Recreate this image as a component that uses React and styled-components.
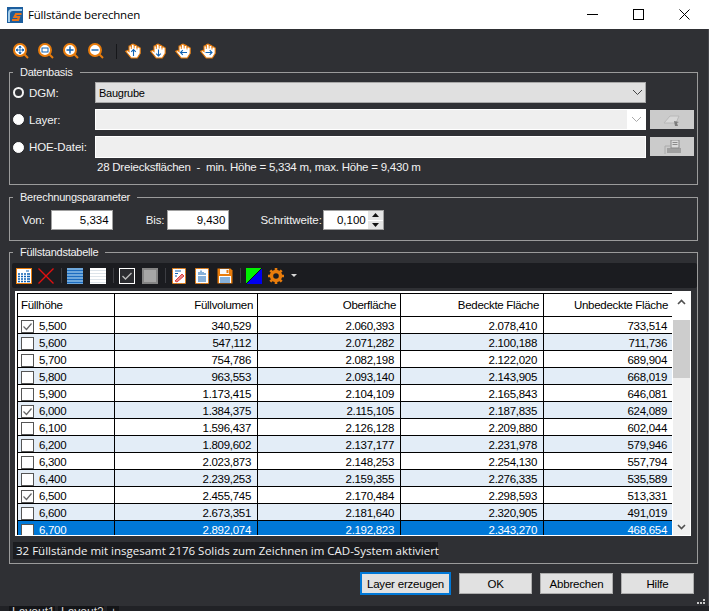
import React from 'react'
import styled, { createGlobalStyle } from 'styled-components'

const GlobalStyle = createGlobalStyle`
  html, body { margin: 0; padding: 0; background: #2f3034; }
  * { box-sizing: border-box; }
`

const orange = '#e87c0c'
const blue = '#0f62b4'

const Page = styled.div`
  width: 709px;
  height: 611px;
  overflow: hidden;
  display: flex;
  flex-direction: column;
  background: #2f3034;
  font-family: "Liberation Sans", Arial, sans-serif;
  font-size: 11px;
  color: #f2f2f2;
`

const TitleBar = styled.div`
  height: 29px;
  flex: none;
  background: #fff;
  display: flex;
  align-items: center;
  padding-left: 7px;
  color: #000;
`

const TitleText = styled.span`
  margin-left: 5px;
  font-family: "Open Sans", sans-serif;
  font-size: 11.5px;
  letter-spacing: -0.2px;
`

const WindowButtons = styled.div`
  margin-left: auto;
  display: flex;
  align-items: center;
  gap: 35px;
  padding-right: 19px;
`

const Body = styled.div`
  flex: 1;
  min-height: 0;
  padding: 14px 10px 0 9px;
  display: flex;
  flex-direction: column;
  border-right: 1px solid #45464b;
`

const MainToolbar = styled.div`
  height: 22px;
  flex: none;
  display: flex;
  align-items: flex-start;
  padding-left: 4px;
  gap: 9px;
`

const ToolSep = styled.i`
  width: 1px;
  height: 15px;
  margin: 1px -1px 0 3px;
  background: #16171a;
  flex: none;
`

const TableSep = styled.i`
  width: 1px;
  height: 15px;
  margin-right: -2px;
  background: #3c3d42;
  flex: none;
`

const ToolCell = styled.span`
  width: 16px;
  height: 16px;
  flex: none;
  display: flex;
  align-items: center;
  justify-content: center;
  margin-left: ${p => p.$ml || 0}px;
`

const Group = styled.fieldset`
  margin: ${p => p.$top}px 0 0;
  padding: 0;
  min-width: 0;
  height: ${p => p.$height}px;
  flex: none;
  border: 1px solid #9b9b9b;
  border-radius: 0;
`

const GroupTitle = styled.legend`
  margin-left: 3px;
  padding: 0 7px;
  font-size: 11px;
  line-height: 14px;
  letter-spacing: -0.25px;
  color: #f2f2f2;
`

const SourceGrid = styled.div`
  display: grid;
  grid-template-columns: 82px 555px 44px;
  padding: 3px 0 0 3px;
`

const SourceRow = styled.div`
  display: contents;
`

const RadioLabel = styled.label`
  display: flex;
  align-items: center;
  gap: 5px;
  height: ${p => p.$h}px;
  margin-bottom: ${p => p.$mb}px;
  font-size: 11.5px;
  letter-spacing: -0.1px;
`

const Radio = styled.span`
  width: 11px;
  height: 11px;
  border-radius: 50%;
  flex: none;
  background: ${p => (p.$on ? '#2f3034' : '#fff')};
  border: ${p => (p.$on ? '2.5px solid #f4f4f4' : '1px solid #fff')};
`

const Combo = styled.div`
  width: 551px;
  height: ${p => p.$h}px;
  margin-bottom: ${p => p.$mb}px;
  display: flex;
  align-items: center;
  justify-content: space-between;
  padding-left: 3px;
  color: #000;
  letter-spacing: -0.25px;
  background: ${p => (p.$off ? '#efefef' : '#e0e0e0')};
  border: ${p => (p.$off ? '1px solid #fff' : '1px solid #a8a8a8')};
`

const ComboArrow = styled.span`
  width: ${p => (p.$off ? 18 : 16)}px;
  height: 100%;
  display: flex;
  align-items: center;
  justify-content: center;
  background: ${p => (p.$off ? '#fff' : 'transparent')};
`

const PickButton = styled.div`
  width: 44px;
  height: 19px;
  margin-top: 1px;
  display: flex;
  align-items: center;
  justify-content: center;
  background: #cbcbcb;
`

const InfoText = styled.div`
  margin: 2px 0 0 87px;
  line-height: 15px;
  font-size: 11.5px;
  letter-spacing: -0.23px;
`

const ParamRow = styled.div`
  display: flex;
  align-items: center;
  padding-left: 12px;
  height: 22px;
  margin-top: 5px;
`

const ParamLabel = styled.span`
  font-size: 11.5px;
  letter-spacing: -0.1px;
  margin-left: ${p => p.$left || 0}px;
  margin-right: ${p => p.$right || 4}px;
`

const NumberField = styled.div`
  width: ${p => p.$w || 62}px;
  height: 20px;
  display: flex;
  align-items: center;
  justify-content: flex-end;
  background: #fff;
  border: 1px solid #a0a0a0;
  padding-right: 3px;
  color: #000;
  font-size: 11.5px;
`

const SpinBox = styled(NumberField)`
  padding-right: 0;
`

const SpinButtons = styled.div`
  width: 15px;
  height: 18px;
  margin-left: 2px;
  display: flex;
  flex-direction: column;
  gap: 1px;
`

const SpinButton = styled.div`
  flex: 1;
  background: #e4e4e4;
  display: flex;
  align-items: center;
  justify-content: center;
`

const TableToolbar = styled.div`
  height: 25px;
  margin: 4px 0 0 2px;
  width: 685px;
  background: #1b1c20;
  border-radius: 2px;
  display: flex;
  align-items: center;
  padding-left: 4px;
  gap: 7px;
`

const GridFrame = styled.div`
  margin: 3px 0 0 5px;
  width: 676px;
  height: 245px;
  background: #fff;
  display: flex;
  padding: 2px 2px 0 2px;
  overflow: hidden;
  border-bottom: 1px solid #fff;
`

const GridClip = styled.div`
  width: 655px;
  flex: none;
  overflow: hidden;
`

const DataTable = styled.table`
  border-collapse: collapse;
  table-layout: fixed;
  width: 656px;
  color: #000;
  font-size: 11.5px;
  letter-spacing: -0.3px;
`

const HeadCell = styled.th`
  height: 23px;
  padding: 0 ${p => (p.$last ? 5 : 4)}px 0 3px;
  border: 1px solid #000;
  font-weight: 400;
  text-align: ${p => (p.$left ? 'left' : 'right')};
`

const Row = styled.tr`
  background: ${p => (p.$selected ? '#0078d7' : p.$alt ? '#e3edf7' : '#fff')};
  color: ${p => (p.$selected ? '#fff' : '#000')};
`

const Cell = styled.td`
  height: 17px;
  padding: 1px 6px 0 3px;
  border: 1px solid #000;
  border-top-style: ${p => (p.$focus ? 'dotted' : 'solid')};
  text-align: right;
  white-space: nowrap;
`

const FirstCell = styled(Cell)`
  padding: 0 0 0 3px;
  text-align: left;
`

const CellInner = styled.div`
  display: flex;
  align-items: center;
  gap: 5px;
  height: 15px;
  padding-top: 1px;
`

const Check = styled.span`
  width: 13px;
  height: 13px;
  flex: none;
  margin-top: 1px;
  background: #fff;
  border: 1px solid #555;
  display: flex;
  align-items: center;
  justify-content: center;
`

const ScrollBar = styled.div`
  width: 17px;
  margin-left: 1px;
  flex: none;
  display: flex;
  flex-direction: column;
  background: #f0f0f0;
`

const ScrollArrow = styled.div`
  height: ${p => p.$h}px;
  flex: none;
  display: flex;
  align-items: ${p => (p.$down ? 'center' : 'flex-start')};
  justify-content: center;
  padding-top: ${p => (p.$down ? 0 : 6)}px;
  background: ${p => (p.$down ? 'transparent' : '#fff')};
`

const ScrollThumb = styled.div`
  height: 58px;
  flex: none;
  background: #cdcdcd;
`

const ScrollRest = styled.div`
  flex: 1;
`

const StatusBar = styled.div`
  margin: 6px 0 0 3px;
  width: 425px;
  height: 17px;
  background: #1b1c20;
  display: flex;
  align-items: center;
  padding-left: 3px;
  font-family: "Open Sans", sans-serif;
  font-size: 11.5px;
  white-space: nowrap;
`

const Footer = styled.div`
  display: flex;
  justify-content: flex-end;
  align-items: center;
  gap: 8px;
  margin-top: 8px;
  padding-right: 4px;
`

const DialogButton = styled.button`
  width: ${p => p.$w || 73}px;
  height: ${p => (p.$primary ? 23 : 21)}px;
  padding: 0;
  background: #e1e1e1;
  color: #000;
  border: ${p => (p.$primary ? '2px solid #0078d7' : '1px solid #adadad')};
  font-family: "Liberation Sans", Arial, sans-serif;
  font-size: 11.5px;
  letter-spacing: -0.2px;
`

const Grip = styled.div`
  height: 5px;
  margin: 4px -8px 0 0;
  display: flex;
  justify-content: flex-end;
`

const TabStrip = styled.div`
  height: 5px;
  flex: none;
  background: #212226;
  display: flex;
  padding-left: 9px;
  gap: 3px;
  overflow: hidden;
  color: #d8d8d8;
  font-size: 12px;
  line-height: 13px;
`

const Tab = styled.span`
  background: #131417;
  padding: 0 3px;
  width: ${p => p.$w}px;
  flex: none;
`

const rows = [
  ['5,500', '340,529', '2.060,393', '2.078,410', '733,514', true],
  ['5,600', '547,112', '2.071,282', '2.100,188', '711,736'],
  ['5,700', '754,786', '2.082,198', '2.122,020', '689,904'],
  ['5,800', '963,553', '2.093,140', '2.143,905', '668,019'],
  ['5,900', '1.173,415', '2.104,109', '2.165,843', '646,081'],
  ['6,000', '1.384,375', '2.115,105', '2.187,835', '624,089', true],
  ['6,100', '1.596,437', '2.126,128', '2.209,880', '602,044'],
  ['6,200', '1.809,602', '2.137,177', '2.231,978', '579,946'],
  ['6,300', '2.023,873', '2.148,253', '2.254,130', '557,794'],
  ['6,400', '2.239,253', '2.159,355', '2.276,335', '535,589'],
  ['6,500', '2.455,745', '2.170,484', '2.298,593', '513,331', true],
  ['6,600', '2.673,351', '2.181,640', '2.320,905', '491,019'],
  ['6,700', '2.892,074', '2.192,823', '2.343,270', '468,654'],
]

const AppLogo = () => (
  <svg width="16" height="16" viewBox="0 0 16 16">
    <rect width="16" height="16" fill="#1c5e9e" />
    <path d="M1 15V6Q1 2 5 2H15V4H6Q3 4 3 7V15z" fill="#a5cdea" />
    <path d="M14.5 7H9L7.5 10H12L11 13H5" fill="none" stroke="#e8741a" strokeWidth="2.2" />
  </svg>
)

const Magnifier = ({ children }) => (
  <svg width="16" height="16" viewBox="0 0 16 16">
    <path d="M10.5 10.5L15 15" stroke={orange} strokeWidth="2" />
    <circle cx="7" cy="7" r="6" fill="#fff" stroke={orange} strokeWidth="2" />
    {children}
  </svg>
)

const Hand = ({ arrow }) => (
  <svg width="16" height="16" viewBox="0 0 16 16">
    <path
      d="M.8 8.3L2.8 7.4 4 8.5V3.2L5.5 2.6 6.3 3.4V1.6L8 1 9.2 1.6V2.6L10.5 2.2 12 3V4.2L13.4 3.8 15.2 5V10.4L12.3 15H6.2z"
      fill="#fff"
      stroke={orange}
      strokeWidth="1.1"
    />
    <path d="M6.3 3.4V6M9.2 2.6V5.5M12 4.2V6.5" stroke={orange} strokeWidth=".9" />
    <path d={arrow} fill="none" stroke={blue} strokeWidth="1.1" />
  </svg>
)

const Chevron = ({ color = '#444' }) => (
  <svg width="11" height="7" viewBox="0 0 11 7">
    <path d="M1 1l4.5 4.5L10 1" fill="none" stroke={color} strokeWidth="1" />
  </svg>
)

const CalcIcon = () => (
  <svg width="16" height="16" viewBox="0 0 16 16">
    <rect x=".5" y=".5" width="15" height="15" fill="#fff" stroke={orange} />
    <path d="M10 3h3" stroke={blue} />
    <path d="M2 6h12M2 8.5h12M2 11h12M2 13.5h12" stroke={blue} strokeWidth="1.5" />
    <path d="M4.5 5v10M7.5 5v10M10.5 5v10" stroke="#fff" />
  </svg>
)

const CrossIcon = () => (
  <svg width="16" height="16" viewBox="0 0 16 16">
    <path d="M.5.5l15 15M15.5.5l-15 15" stroke="#e01010" strokeWidth="1.4" />
  </svg>
)

const LinesIcon = ({ fill, line }) => (
  <svg width="16" height="16" viewBox="0 0 16 16">
    <rect width="16" height="16" fill={fill} />
    <path d="M0 2.5h16M0 5.5h16M0 8.5h16M0 11.5h16M0 14.5h16" stroke={line} />
  </svg>
)

const CheckAllIcon = () => (
  <svg width="16" height="16" viewBox="0 0 16 16">
    <rect x=".5" y=".5" width="15" height="15" fill="#2b2c30" stroke="#fff" />
    <path d="M3.5 8l3 3 6-6" fill="none" stroke="#bbb" strokeWidth="1.4" />
  </svg>
)

const GrayBoxIcon = () => (
  <svg width="16" height="16" viewBox="0 0 16 16">
    <rect x="1" y="1" width="14" height="14" fill="#a6a6a6" stroke="#858585" strokeWidth="2" />
  </svg>
)

const EditDocIcon = () => (
  <svg width="14" height="16" viewBox="0 0 14 16">
    <rect x=".5" y=".5" width="13" height="15" fill="#fff" stroke={orange} strokeDasharray="2 .6" />
    <path d="M3 3h6M3 5.5h3M3 8h2" stroke={blue} />
    <path d="M3 13l7-7 2 2-7 6z" fill="#e88" stroke="#d02020" strokeWidth=".8" />
  </svg>
)

const ChartDocIcon = () => (
  <svg width="14" height="16" viewBox="0 0 14 16">
    <rect x=".5" y=".5" width="13" height="15" fill="#fff" stroke={orange} strokeDasharray="2 .6" />
    <path d="M4 7V4M6 7V2.5M8 7V4M10 7V5" stroke={blue} />
    <path d="M3 9h8M3 11h8M3 13h8" stroke={blue} />
  </svg>
)

const SaveIcon = () => (
  <svg width="16" height="16" viewBox="0 0 16 16">
    <path d="M.5.5h13l2 2v13H.5z" fill={orange} />
    <rect x="3" y="1" width="9" height="5" fill="#f7f7f7" />
    <rect x="9.5" y="2" width="2" height="3" fill={orange} />
    <rect x="2" y="8" width="12" height="7" fill="#fff" />
    <path d="M3 10h10M3 12h10M3 14h10" stroke={blue} />
  </svg>
)

const ColorIcon = () => (
  <svg width="16" height="16" viewBox="0 0 16 16">
    <rect width="16" height="16" fill="#0000f0" />
    <path d="M0 0h16L0 16z" fill="#00f000" />
    <path d="M16 0L0 16" stroke="#111" />
  </svg>
)

const GearIcon = () => (
  <svg width="16" height="16" viewBox="0 0 16 16">
    <circle cx="8" cy="8" r="4.5" fill="none" stroke={orange} strokeWidth="3.4" />
    <path
      d="M8 0v3M8 13v3M0 8h3M13 8h3M2.3 2.3l2.2 2.2M11.5 11.5l2.2 2.2M13.7 2.3l-2.2 2.2M4.5 11.5l-2.2 2.2"
      stroke={orange}
      strokeWidth="2.6"
    />
  </svg>
)

const Caret = () => (
  <svg width="6" height="4" viewBox="0 0 6 4">
    <path d="M0 0h6L3 3z" fill="#d8d8d8" />
  </svg>
)

const TinyArrow = ({ down }) => (
  <svg width="7" height="4" viewBox="0 0 7 4">
    <path d={down ? 'M0 0h7L3.5 4z' : 'M0 4h7L3.5 0z'} fill="#111" />
  </svg>
)

const ScrollChevron = ({ down }) => (
  <svg width="9" height="6" viewBox="0 0 9 6">
    <path d={down ? 'M1 1l3.5 3.5L8 1' : 'M1 5l3.5-3.5L8 5'} fill="none" stroke="#505050" strokeWidth="1.6" />
  </svg>
)

const App = () => {
  return (
    <Page>
      <GlobalStyle />
      <TitleBar>
        <AppLogo />
        <TitleText>Füllstände berechnen</TitleText>
        <WindowButtons>
          <svg width="11" height="11" viewBox="0 0 11 11"><path d="M0 5.5h11" stroke="#000" /></svg>
          <svg width="11" height="11" viewBox="0 0 11 11"><rect x=".5" y=".5" width="10" height="10" fill="none" stroke="#000" /></svg>
          <svg width="11" height="11" viewBox="0 0 11 11"><path d="M.5.5l10 10M10.5.5l-10 10" stroke="#000" /></svg>
        </WindowButtons>
      </TitleBar>

      <Body>
        <MainToolbar>
          <Magnifier><path d="M7 3.5v7M3.5 7h7M7 3L5.8 4.4h2.4zM7 11l-1.2-1.4h2.4zM3 7l1.4-1.2v2.4zM11 7L9.6 5.8v2.4z" stroke={blue} fill={blue} strokeWidth=".8" /></Magnifier>
          <Magnifier><rect x="4" y="5" width="6" height="4" fill="none" stroke={blue} /></Magnifier>
          <Magnifier><path d="M3.5 7h7M7 3.5v7" stroke={blue} strokeWidth="1.4" /></Magnifier>
          <Magnifier><path d="M3.5 7h7" stroke={blue} strokeWidth="1.4" /></Magnifier>
          <ToolSep />
          <Hand arrow="M8.5 13V6.5M6.2 8.8l2.3-2.3 2.3 2.3" />
          <Hand arrow="M8.5 6.5V13M6.2 10.7L8.5 13l2.3-2.3" />
          <Hand arrow="M12 9.5H5.5M7.8 7.2L5.5 9.5l2.3 2.3" />
          <Hand arrow="M5.5 9.5H12M9.7 7.2L12 9.5l-2.3 2.3" />
        </MainToolbar>

        <Group $top={0} $height={120}>
          <GroupTitle>Datenbasis</GroupTitle>
          <SourceGrid>
            <SourceRow>
              <RadioLabel $h={21} $mb={6}><Radio $on />DGM:</RadioLabel>
              <Combo $h={21} $mb={6}>Baugrube<ComboArrow><Chevron /></ComboArrow></Combo>
              <span />
            </SourceRow>
            <SourceRow>
              <RadioLabel $h={21} $mb={6}><Radio />Layer:</RadioLabel>
              <Combo $off $h={21} $mb={6}><span /><ComboArrow $off><Chevron color="#aaa" /></ComboArrow></Combo>
              <PickButton>
                <svg width="18" height="12" viewBox="0 0 18 12">
                  <path d="M1 9L7 2h9l-3 7z" fill="#d8d8d8" stroke="#b8b8b8" />
                  <path d="M11 7l5 1-2 1 1 3h-3z" fill="#7c7c7c" />
                </svg>
              </PickButton>
            </SourceRow>
            <SourceRow>
              <RadioLabel $h={22} $mb={0}><Radio />HOE-Datei:</RadioLabel>
              <Combo $off $h={22} $mb={0} />
              <PickButton>
                <svg width="17" height="14" viewBox="0 0 17 14">
                  <path d="M1 14V6h5" fill="none" stroke="#aaa" />
                  <rect x="3" y="8" width="14" height="5" fill="#a0a0a0" />
                  <rect x="7" y="0" width="8" height="8" fill="#dcdcdc" stroke="#8a8a8a" />
                  <path d="M8.5 2.5h5M8.5 4.5h5" stroke="#8a8a8a" />
                </svg>
              </PickButton>
            </SourceRow>
          </SourceGrid>
          <InfoText>28 Dreiecksflächen&nbsp; -&nbsp; min. Höhe = 5,334 m, max. Höhe = 9,430 m</InfoText>
        </Group>

        <Group $top={5} $height={51}>
          <GroupTitle>Berechnungsparameter</GroupTitle>
          <ParamRow>
            <ParamLabel $right={6}>Von:</ParamLabel>
            <NumberField>5,334</NumberField>
            <ParamLabel $left={33} $right={3}>Bis:</ParamLabel>
            <NumberField>9,430</NumberField>
            <ParamLabel $left={31} $right={1}>Schrittweite:</ParamLabel>
            <SpinBox $w={61}>
              0,100
              <SpinButtons>
                <SpinButton><TinyArrow /></SpinButton>
                <SpinButton><TinyArrow down /></SpinButton>
              </SpinButtons>
            </SpinBox>
          </ParamRow>
        </Group>

        <Group $top={4} $height={319}>
          <GroupTitle>Füllstandstabelle</GroupTitle>
          <TableToolbar>
            <CalcIcon />
            <ToolCell $ml={-1}><CrossIcon /></ToolCell>
            <TableSep />
            <LinesIcon fill="#6fa8dc" line="#1c6cc0" />
            <LinesIcon fill="#fff" line="#dde4ea" />
            <TableSep />
            <CheckAllIcon />
            <GrayBoxIcon />
            <TableSep />
            <ToolCell><EditDocIcon /></ToolCell>
            <ToolCell><ChartDocIcon /></ToolCell>
            <SaveIcon />
            <TableSep />
            <ColorIcon />
            <ToolCell $ml={-1}><GearIcon /></ToolCell>
            <Caret />
          </TableToolbar>

          <GridFrame>
            <GridClip>
              <DataTable>
                <colgroup>
                  <col width="97" />
                  <col width="143" />
                  <col width="143" />
                  <col width="143" />
                  <col width="130" />
                </colgroup>
                <thead>
                  <tr>
                    <HeadCell $left>Füllhöhe</HeadCell>
                    <HeadCell>Füllvolumen</HeadCell>
                    <HeadCell>Oberfläche</HeadCell>
                    <HeadCell>Bedeckte Fläche</HeadCell>
                    <HeadCell $last>Unbedeckte Fläche</HeadCell>
                  </tr>
                </thead>
                <tbody>
                  {rows.map((r, i) => (
                    <Row key={r[0]} $alt={i % 2 === 1} $selected={i === 12}>
                      <FirstCell $focus={i === 2}>
                        <CellInner>
                          <Check>
                            {r[5] && (
                              <svg width="11" height="11" viewBox="0 0 11 11">
                                <path d="M1.5 5.5l3 3 5-6" fill="none" stroke="#666" strokeWidth="1.2" />
                              </svg>
                            )}
                          </Check>
                          {r[0]}
                        </CellInner>
                      </FirstCell>
                      <Cell $focus={i === 2}>{r[1]}</Cell>
                      <Cell $focus={i === 2}>{r[2]}</Cell>
                      <Cell $focus={i === 2}>{r[3]}</Cell>
                      <Cell $focus={i === 2}>{r[4]}</Cell>
                    </Row>
                  ))}
                </tbody>
              </DataTable>
            </GridClip>
            <ScrollBar>
              <ScrollArrow $h={27}><ScrollChevron /></ScrollArrow>
              <ScrollThumb />
              <ScrollRest />
              <ScrollArrow $h={17} $down><ScrollChevron down /></ScrollArrow>
            </ScrollBar>
          </GridFrame>

          <StatusBar>32 Füllstände mit insgesamt 2176 Solids zum Zeichnen im CAD-System aktiviert</StatusBar>
        </Group>

        <Footer>
          <DialogButton $primary $w={91}>Layer erzeugen</DialogButton>
          <DialogButton>OK</DialogButton>
          <DialogButton>Abbrechen</DialogButton>
          <DialogButton>Hilfe</DialogButton>
        </Footer>
        <Grip>
          <svg width="9" height="6" viewBox="0 0 9 6">
            <path d="M6 0h2v2H6zM3 3h2v2H3zM6 3h2v2H6zM0 3h2v2H0z" fill="#c8c8c8" />
          </svg>
        </Grip>
      </Body>

      <TabStrip>
        <Tab $w={46}>Layout1</Tab>
        <Tab $w={46}>Layout2</Tab>
        <Tab $w={12}>+</Tab>
      </TabStrip>
    </Page>
  )
}

export default App
